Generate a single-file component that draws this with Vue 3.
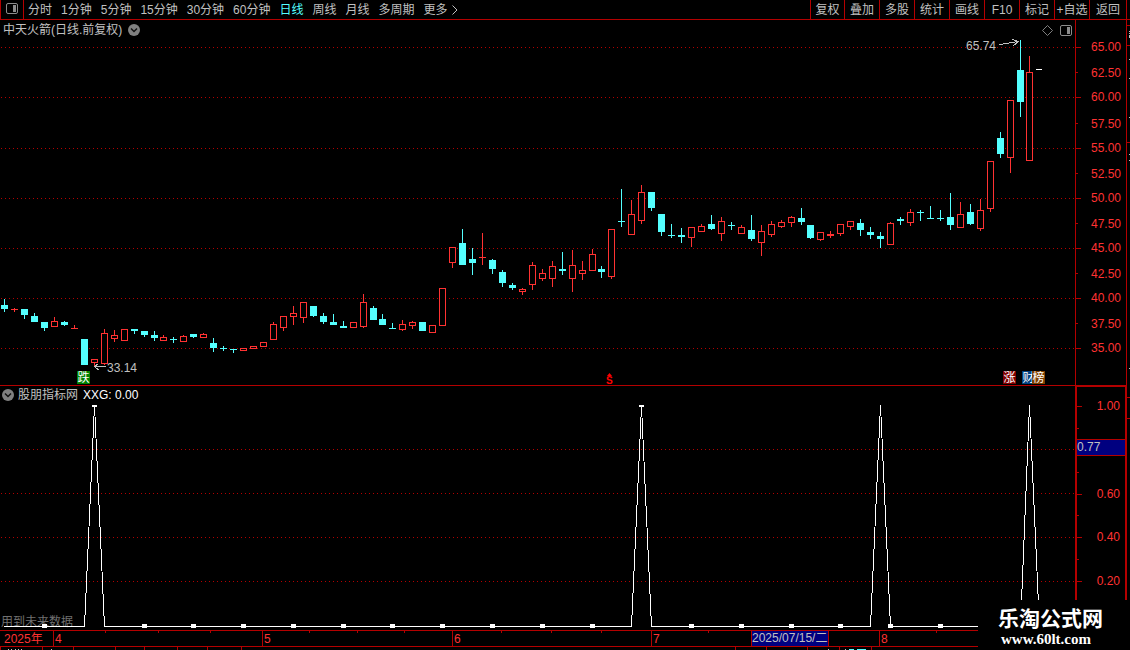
<script setup>
const periods = ['分时', '1分钟', '5分钟', '15分钟', '30分钟', '60分钟', '日线', '周线', '月线', '多周期', '更多']
const tools = ['复权', '叠加', '多股', '统计', '画线', 'F10', '标记', '+自选', '返回']

// [centre x, body top, body bottom, wick top, wick bottom, u = rising / d = falling]
const candles = [
  [4, 305, 309, 299, 312, 'd'], [14, 309, 310, 308, 312, 'u'], [24, 309, 315, 309, 319, 'd'],
  [34, 316, 322, 313, 322, 'd'], [44, 322, 328, 322, 331, 'd'], [54, 321, 327, 317, 327, 'u'],
  [64, 322, 325, 321, 326, 'd'], [74, 328, 329, 325, 329, 'u'], [84, 339, 365, 339, 365, 'd'],
  [94, 359, 363, 359, 366, 'u'], [104, 333, 364, 329, 365, 'u'], [114, 335, 339, 330, 342, 'u'],
  [124, 329, 341, 329, 341, 'u'], [134, 329, 331, 329, 334, 'd'], [144, 331, 335, 331, 337, 'd'],
  [154, 335, 338, 331, 341, 'd'], [163, 337, 341, 335, 341, 'u'], [173, 339, 340, 337, 343, 'd'],
  [183, 336, 342, 335, 342, 'u'], [193, 334, 337, 334, 338, 'd'], [203, 334, 338, 333, 338, 'u'],
  [213, 343, 348, 338, 352, 'd'], [223, 348, 349, 346, 351, 'd'], [233, 349, 350, 349, 353, 'd'],
  [243, 348, 351, 348, 351, 'u'], [253, 346, 349, 346, 349, 'u'], [263, 342, 347, 342, 347, 'u'],
  [273, 324, 340, 322, 340, 'u'], [283, 316, 328, 316, 331, 'u'], [293, 313, 317, 306, 325, 'u'],
  [303, 302, 318, 302, 323, 'u'], [313, 306, 316, 306, 317, 'd'], [323, 316, 322, 313, 324, 'd'],
  [333, 322, 325, 314, 325, 'd'], [343, 326, 328, 321, 328, 'd'], [353, 322, 328, 322, 328, 'u'],
  [363, 302, 327, 294, 328, 'u'], [373, 308, 320, 306, 320, 'd'], [382, 319, 325, 314, 325, 'd'],
  [392, 328, 329, 323, 329, 'd'], [402, 324, 330, 320, 331, 'u'], [412, 322, 326, 321, 329, 'u'],
  [422, 322, 331, 322, 331, 'd'], [432, 325, 333, 325, 333, 'u'], [442, 288, 326, 288, 326, 'u'],
  [452, 247, 263, 247, 268, 'u'], [462, 243, 265, 229, 265, 'd'], [472, 259, 263, 248, 275, 'd'],
  [482, 257, 258, 233, 265, 'u'], [492, 260, 269, 259, 274, 'd'], [502, 272, 283, 270, 287, 'd'],
  [512, 285, 288, 283, 290, 'd'], [522, 289, 292, 288, 295, 'u'], [532, 265, 285, 262, 290, 'u'],
  [542, 273, 279, 269, 281, 'u'], [552, 266, 279, 261, 287, 'u'], [562, 269, 271, 252, 275, 'd'],
  [572, 265, 279, 250, 292, 'u'], [582, 270, 274, 261, 280, 'u'], [592, 254, 271, 249, 271, 'u'],
  [601, 269, 272, 266, 278, 'd'], [611, 229, 277, 229, 279, 'u'], [621, 221, 222, 189, 227, 'd'],
  [631, 214, 235, 200, 235, 'u'], [641, 192, 221, 185, 224, 'u'], [651, 192, 208, 192, 211, 'd'],
  [661, 214, 232, 214, 236, 'd'], [671, 235, 236, 224, 238, 'd'], [681, 235, 237, 228, 243, 'd'],
  [691, 227, 238, 227, 247, 'u'], [701, 226, 232, 224, 232, 'u'], [711, 224, 229, 215, 230, 'd'],
  [721, 221, 234, 217, 241, 'u'], [731, 225, 226, 222, 230, 'd'], [741, 227, 234, 225, 234, 'u'],
  [751, 230, 239, 215, 241, 'd'], [761, 231, 243, 225, 256, 'u'], [771, 224, 235, 221, 237, 'u'],
  [781, 222, 227, 220, 228, 'u'], [791, 217, 223, 216, 227, 'u'], [801, 218, 222, 208, 225, 'd'],
  [810, 225, 238, 225, 239, 'd'], [820, 232, 240, 232, 241, 'u'], [830, 234, 236, 231, 238, 'u'],
  [840, 224, 234, 224, 236, 'u'], [850, 221, 227, 221, 230, 'u'], [860, 223, 230, 219, 236, 'd'],
  [870, 232, 235, 227, 239, 'd'], [880, 236, 239, 232, 248, 'd'], [890, 223, 245, 222, 245, 'u'],
  [900, 219, 221, 217, 225, 'd'], [910, 212, 223, 209, 226, 'u'], [920, 212, 213, 210, 221, 'd'],
  [930, 218, 219, 206, 219, 'd'], [940, 218, 219, 210, 221, 'd'], [950, 217, 225, 193, 230, 'd'],
  [960, 214, 228, 202, 228, 'u'], [970, 212, 224, 204, 225, 'd'], [980, 210, 229, 199, 231, 'u'],
  [990, 161, 209, 161, 212, 'u'], [1000, 138, 154, 132, 158, 'd'], [1010, 100, 158, 100, 173, 'u'],
  [1020, 70, 102, 40, 117, 'd'], [1029, 72, 161, 56, 161, 'u']
]

const priceTicks = [
  ['65.00', 47], ['62.50', 73], ['60.00', 97], ['57.50', 124], ['55.00', 148], ['52.50', 174], ['50.00', 198],
  ['47.50', 224], ['45.00', 248], ['42.50', 274], ['40.00', 298], ['37.50', 324], ['35.00', 348]
]
const mainGrid = [47, 97, 148, 198, 248, 298, 348]
const subGrid = [449, 493, 537, 581]
const subTicks = [['1.00', 405], ['0.60', 493], ['0.40', 537], ['0.20', 581]]
const subMinor = [427, 471, 515, 559, 603]

const signal = 'M4 626.5H84.5L94.5 405L104.5 626.5H631.5L641.5 406L651.5 626.5H870.5L880.5 405L890.5 626.5H1020.5L1029.5 405L1039.5 626.5H1075'
const markers = [44, 144, 193, 243, 293, 343, 392, 442, 492, 542, 592, 691, 741, 791, 840, 890, 940]

const months = [['4', 53], ['5', 262], ['6', 452], ['7', 651], ['8', 879]]
const dateTicks = [105, 158, 210, 309, 357, 404, 501, 551, 601, 708, 936]
const quoteTicks = [0, 42, 73, 115, 144, 177, 207, 241, 735, 766, 807, 839, 871]

const W = 1075
const atMain = (x, y) => ({ left: (x / W) * 100 + '%', top: ((y - 20) / 365) * 100 + '%' })
const topMain = (y) => ({ top: ((y - 20) / 365) * 100 + '%' })
const topSub = (y) => ({ top: ((y - 386) / 244) * 100 + '%' })
const leftDate = (x) => ({ left: (x / 1130) * 100 + '%' })
</script>

<template>
  <div class="terminal">
    <header class="toolbar">
      <button class="layout-toggle" aria-label="布局">
        <svg width="12" height="12" viewBox="0 0 12 12">
          <rect x="0.5" y="0.5" width="11" height="10" rx="1.5" fill="none" stroke="#8c8c8c" />
          <rect x="7" y="2" width="3" height="7" fill="#8c8c8c" />
        </svg>
      </button>
      <nav class="periods">
        <button v-for="p in periods" :key="p" :class="{ active: p === '日线', more: p === '更多' }">
          {{ p }}
          <svg v-if="p === '更多'" width="6" height="10" viewBox="0 0 6 10">
            <path d="M0.5 0.5L5 5L0.5 9.5" fill="none" stroke="#c0c0c0" />
          </svg>
        </button>
      </nav>
      <nav class="tools">
        <button v-for="t in tools" :key="t">{{ t }}</button>
      </nav>
    </header>

    <section class="pane main-pane">
      <div class="plot">
        <svg class="canvas" viewBox="0 20 1075 365" preserveAspectRatio="none" shape-rendering="crispEdges">
          <line v-for="y in mainGrid" :key="y" class="grid" x1="1" :y1="y + 0.5" x2="1075" :y2="y + 0.5" />
          <g v-for="c in candles" :key="c[0]" :class="c[5] === 'u' ? 'up' : 'down'">
            <rect v-if="c[3] < c[1]" :x="c[0]" :y="c[3]" width="1" :height="c[1] - c[3]" />
            <rect v-if="c[4] > c[2]" :x="c[0]" :y="c[2]" width="1" :height="c[4] - c[2]" />
            <rect v-if="c[5] === 'd' || c[2] - c[1] < 3" :x="c[0] - 3" :y="c[1]" width="7" :height="c[2] - c[1]" />
            <rect v-else class="hollow" :x="c[0] - 2.5" :y="c[1] + 0.5" width="6" :height="c[2] - c[1] - 1" />
          </g>
          <rect x="1036" y="69" width="6" height="1" fill="#fff" />
          <path class="pointer" d="M999.5 44.5L1018.5 41.5M1012 39.5L1018.5 41.5L1013.5 45.5" />
          <path class="pointer" d="M94.5 366.5H106M98.5 363.5L94.5 366.5L98.5 370" />
        </svg>
        <div class="title-row">
          <span>中天火箭(日线.前复权)</span>
          <button class="round" aria-label="展开">
            <svg width="12" height="12" viewBox="0 0 12 12">
              <circle cx="6" cy="6" r="6" fill="#808080" />
              <path d="M3 4.5L6 7.5L9 4.5" fill="none" stroke="#111" stroke-width="1.5" />
            </svg>
          </button>
          <span class="pane-icons">
            <svg width="11" height="11" viewBox="0 0 11 11">
              <path d="M5.5 0.5L10.5 5.5L5.5 10.5L0.5 5.5Z" fill="none" stroke="#808080" />
            </svg>
            <svg width="12" height="11" viewBox="0 0 12 11">
              <rect x="0.5" y="0.5" width="11" height="10" rx="1.5" fill="none" stroke="#8c8c8c" />
              <rect x="7" y="2" width="3" height="7" fill="#8c8c8c" />
            </svg>
          </span>
        </div>
        <span class="label" :style="atMain(966, 46)">65.74</span>
        <span class="label" :style="atMain(107, 368)">33.14</span>
        <span class="badge fall" :style="atMain(77, 378)">跌</span>
        <span class="badge rise" :style="atMain(1003, 378)">涨</span>
        <span class="badge money" :style="atMain(1022, 378)">财</span>
        <span class="badge rank" :style="atMain(1032, 378)">榜</span>
        <span class="split" :style="atMain(606, 380)">
          <svg width="5" height="3" viewBox="0 0 5 3"><path d="M2.5 0L5 3H0Z" fill="#f00" /></svg>
          <b>S</b>
        </span>
      </div>
      <div class="axis">
        <template v-for="(t, i) in priceTicks" :key="t[0]">
          <i class="tick" :class="{ minor: i % 2 }" :style="topMain(i % 2 ? t[1] - 1 : t[1])"></i>
          <span class="value" :style="topMain(t[1])">{{ t[0] }}</span>
        </template>
      </div>
      <svg class="edge" viewBox="0 20 3 366" preserveAspectRatio="none" shape-rendering="crispEdges">
        <path d="M0 25.5H3M0 45.5H3M0 142.5H3" stroke="#b40000" />
        <path d="M2.5 31V32M2.5 33V34M2.5 35V38M2.5 59V60M2.5 78V79M2.5 117V118M2.5 154V155M2.5 160V161M2.5 368V369" stroke="#c0c0c0" />
      </svg>
    </section>

    <section class="pane sub-pane">
      <div class="plot">
        <span class="notice">用到未来数据</span>
        <svg class="canvas" viewBox="0 386 1075 244" preserveAspectRatio="none" shape-rendering="crispEdges">
          <line v-for="y in subGrid" :key="y" class="grid" x1="1" :y1="y + 0.5" x2="1075" :y2="y + 0.5" />
          <path :d="signal" fill="none" stroke="#fff" />
          <rect v-for="x in markers" :key="x" :x="x - 2" y="624" width="5" height="4" fill="#fff" />
          <rect x="92" y="405" width="5" height="2" fill="#fff" />
          <rect x="639" y="405" width="5" height="2" fill="#fff" />
        </svg>
        <div class="indicator-row">
          <button class="round" aria-label="指标菜单">
            <svg width="12" height="12" viewBox="0 0 12 12">
              <circle cx="6" cy="6" r="6" fill="#808080" />
              <path d="M3 4.5L6 7.5L9 4.5" fill="none" stroke="#111" stroke-width="1.5" />
            </svg>
          </button>
          <span class="indicator">股朋指标网</span>
          <span class="reading">XXG: 0.00</span>
        </div>
      </div>
      <div class="axis">
        <template v-for="t in subTicks" :key="t[0]">
          <i class="tick" :style="topSub(t[1])"></i>
          <span class="value" :style="topSub(t[1])">{{ t[0] }}</span>
        </template>
        <i v-for="y in subMinor" :key="y" class="tick minor" :style="topSub(y)"></i>
        <span class="cursor-value" :style="topSub(439)">0.77</span>
      </div>
      <svg class="edge" viewBox="0 386 3 244" preserveAspectRatio="none" shape-rendering="crispEdges">
        <path d="M0 397.5H3M0 418.5H3" stroke="#b40000" />
      </svg>
    </section>

    <footer class="dates">
      <span class="year">2025年</span>
      <i v-for="x in dateTicks" :key="x" class="date-tick" :style="leftDate(x)"></i>
      <span v-for="m in months" :key="m[0]" class="month" :style="leftDate(m[1])">{{ m[0] }}</span>
      <span class="cursor-date" :style="leftDate(751)">2025/07/15/二</span>
    </footer>
    <div class="quotes">
      <i v-for="x in quoteTicks" :key="x" :style="leftDate(x)"></i>
      <svg class="canvas" viewBox="0 647 1130 3" preserveAspectRatio="none" shape-rendering="crispEdges">
        <path d="M8 649.5H9M11 649.5H12M15 649.5H16M18 649.5H19M21 649.5H22M51 649.5H52M828 649.5H829M845 649.5H846" stroke="#c0c0c0" />
        <path d="M849 649.5H854M857 649.5H866" stroke="#54ffff" />
      </svg>
    </div>

    <aside class="brand">
      <strong>乐淘公式网</strong>
      <a href="#">www.60lt.com</a>
    </aside>
  </div>
</template>

<style>
body {
  margin: 0;
  background: #000;
}
</style>

<style scoped>
.terminal {
  position: relative;
  display: grid;
  grid-template-rows: 20px 366fr 244fr 17px 3px;
  height: 100vh;
  overflow: hidden;
  background: #000;
  color: #c0c0c0;
  font: 12px/14px "Liberation Sans", "Noto Sans CJK SC", sans-serif;
  white-space: nowrap;
}
button {
  padding: 0;
  border: 0;
  background: none;
  color: inherit;
  font: inherit;
  cursor: pointer;
}
svg {
  display: block;
}
.toolbar {
  display: flex;
  box-sizing: border-box;
  border-bottom: 1px solid #b40000;
  border-left: 1px solid #b40000;
}
.layout-toggle {
  display: flex;
  align-items: center;
  justify-content: center;
  width: 23px;
  padding-bottom: 2px;
  box-sizing: border-box;
  border-right: 1px solid #b40000;
}
.periods {
  display: flex;
  flex: 1;
  gap: 9px;
  padding-left: 4px;
}
.periods .active {
  color: #54ffff;
}
.more {
  display: flex;
  align-items: center;
  gap: 4px;
}
.tools {
  display: flex;
  margin-right: 3px;
  border-right: 1px solid #b40000;
}
.tools button {
  width: 35px;
  box-sizing: border-box;
  border-left: 1px solid #b40000;
}
.tools button:first-child {
  width: 34px;
}
.tools button:last-child {
  width: 37px;
}
.pane {
  display: grid;
  grid-template-columns: 1fr 52px 3px;
  min-height: 0;
}
.plot {
  position: relative;
  min-width: 0;
}
.main-pane .plot,
.main-pane .axis {
  border-bottom: 1px solid #b40000;
}
.canvas {
  position: absolute;
  inset: 0;
  width: 100%;
  height: 100%;
}
.edge {
  width: 100%;
  height: 100%;
}
.grid {
  stroke: #b40000;
  stroke-dasharray: 1 3;
}
.up {
  fill: #ff3232;
}
.down {
  fill: #54ffff;
}
.hollow {
  fill: #000;
  stroke: #ff3232;
}
.pointer {
  fill: none;
  stroke: #c0c0c0;
}
.title-row {
  position: relative;
  display: flex;
  align-items: center;
  gap: 6px;
  height: 20px;
  padding: 0 3px;
}
.pane-icons {
  display: flex;
  gap: 7px;
  margin-left: auto;
}
.label,
.badge,
.split,
.value {
  position: absolute;
  height: 14px;
  margin-top: -7px;
}
.badge {
  width: 13px;
  height: 13px;
  color: #fff;
  line-height: 15px;
  text-align: center;
}
.fall {
  background: #008000;
}
.rise {
  background: #800000;
}
.money {
  background: #004080;
}
.rank {
  background: #804000;
}
.split {
  display: flex;
  flex-direction: column;
  align-items: center;
  height: 12px;
  color: #f00;
  font-size: 10px;
  line-height: 9px;
}
.axis {
  position: relative;
  border: 0 solid #b40000;
  border-width: 0 1px;
  color: #ff3232;
}
.sub-pane .axis {
  border-width: 1px 2px 0;
}
.tick {
  position: absolute;
  left: 0;
  width: 5px;
  height: 1px;
  background: #b40000;
}
.minor {
  width: 2px;
}
.value {
  right: 5px;
}
.cursor-value {
  position: absolute;
  left: 0;
  right: 0;
  height: 15px;
  margin-top: -1px;
  border: 1px solid #b40000;
  border-width: 1px 0;
  background: #000080;
  color: #c0c0c0;
}
.indicator-row {
  position: relative;
  display: flex;
  align-items: center;
  height: 17px;
  padding-left: 2px;
}
.indicator {
  margin: 0 5px 0 4px;
}
.reading {
  color: #fff;
}
.notice {
  position: absolute;
  left: 1px;
  bottom: 1px;
  color: #707070;
}
.dates {
  position: relative;
  box-sizing: border-box;
  border: 1px solid #b40000;
  border-width: 1px 0;
  color: #ff3232;
  line-height: 17px;
}
.year {
  padding-left: 4px;
}
.date-tick {
  position: absolute;
  top: 0;
  width: 1px;
  height: 2px;
  background: #b40000;
}
.month,
.cursor-date {
  position: absolute;
  top: 0;
  bottom: 0;
  padding-left: 1px;
  border-left: 1px solid #b40000;
}
.cursor-date {
  padding: 0 1px 0 0;
  border-right: 1px solid #b40000;
  background: #000080;
  color: #c0c0c0;
  line-height: 15px;
}
.quotes {
  position: relative;
}
.quotes i {
  position: absolute;
  top: 0;
  width: 1px;
  height: 3px;
  background: #b40000;
}
.brand {
  position: absolute;
  right: 0;
  bottom: 0;
  display: flex;
  flex-direction: column;
  box-sizing: border-box;
  width: 152px;
  height: 50px;
  padding: 7px 0 0 20px;
  background: #000;
  color: #fff;
}
.brand strong {
  font-size: 21px;
  line-height: 24px;
}
.brand a {
  padding-left: 3px;
  color: #fff;
  font: bold 15px/17px "Liberation Serif", serif;
  text-decoration: none;
}
</style>
